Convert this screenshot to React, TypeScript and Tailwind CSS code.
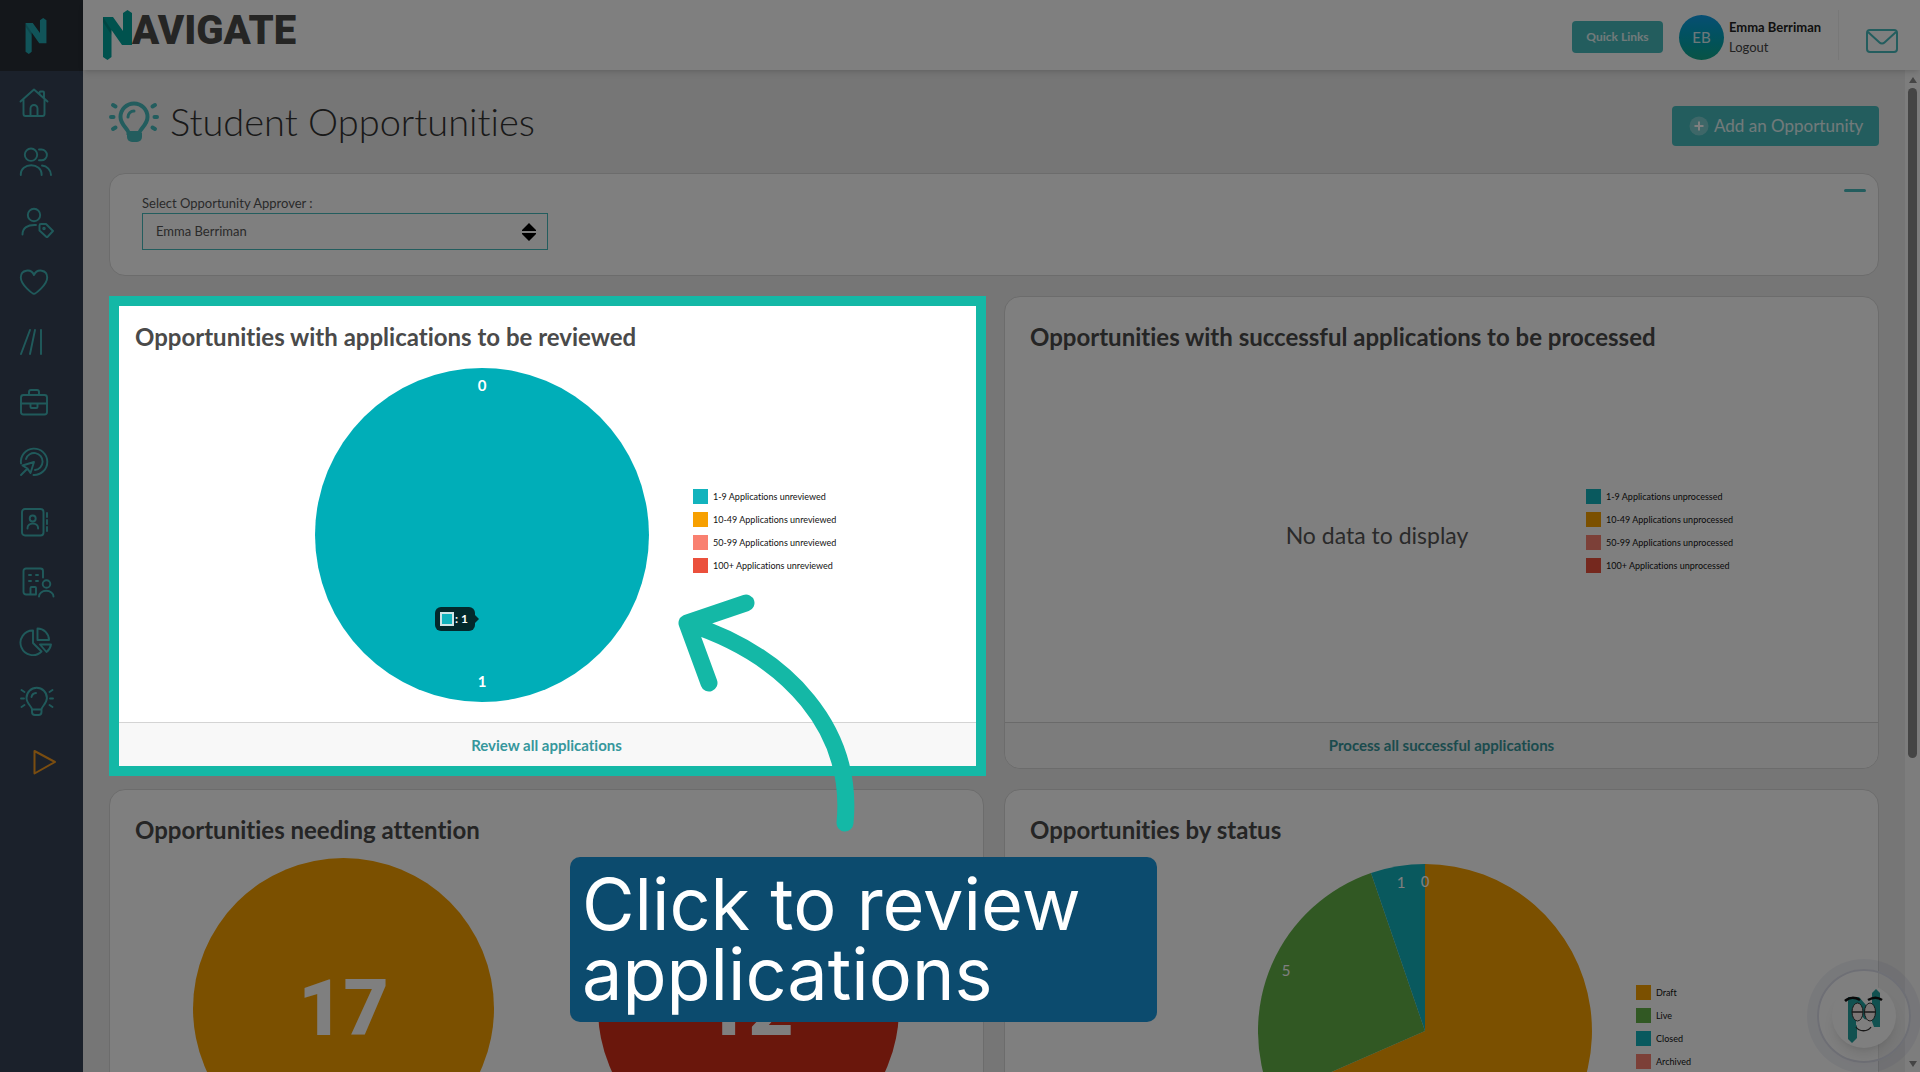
import React from "react";

interface LegendItem {
  label: string;
  color: string;
}

const navIcons: { name: string; shape: React.ReactNode }[] = [
  {
    name: "Home",
    shape: (
      <path d="M1.5 15.5 15 3.5l13.500 12M4.500 13.500V28a2 2 0 0 0 2 2h17a2 2 0 0 0 2-2V13.500M11.500 30v-7.500a3.500 3.500 0 0 1 7 0V30M20.500 8V6.500a1 1 0 0 1 1-1H24a1 1 0 0 1 1 1V12" />
    ),
  },
  {
    name: "Students",
    shape: (
      <>
        <circle cx="12" cy="8.700" r="6.200" />
        <path d="M1.800 29v-1a10.400 8.700 0 0 1 20.800 0v1M20 3.500h2.500a5.300 5.300 0 0 1 0 10.800H20M23 19.500c5 .5 9 4.500 9 9.500" />
      </>
    ),
  },
  {
    name: "Tagged students",
    shape: (
      <>
        <circle cx="15" cy="9" r="6.200" />
        <path d="M3.500 28.500C3.500 22 8.500 18.500 17 19M20.500 19.500a1.500 1.500 0 0 1 1.500-1.500h5l7 7-6 6.500-7.500-7z" />
        <circle cx="25" cy="22.500" r=".8" />
      </>
    ),
  },
  {
    name: "Favourites",
    shape: (
      <path d="M15 27.800c-1 0-13.200-8.500-13.200-16.300C1.800 3.500 12 2.200 15 9c3-6.800 13.200-5.500 13.200 2.500C28.200 19.300 16 27.800 15 27.800z" />
    ),
  },
  { name: "Pathways", shape: <path d="M11 4 2 28M16 4l-5 24M22 4v24" /> },
  {
    name: "Careers",
    shape: (
      <>
        <rect x="2" y="9" width="26" height="19.500" rx="2.500" />
        <path d="M10 9V6a2 2 0 0 1 2-2h6a2 2 0 0 1 2 2v3M2 17.500h26M11.500 17.500V21a1 1 0 0 0 1 1h5a1 1 0 0 0 1-1v-3.500" />
      </>
    ),
  },
  {
    name: "Targets",
    shape: (
      <path d="M2 17.500A13.200 13.200 0 1 1 14.500 29M7 13a8.500 8.500 0 1 1 9 11M2 29l6.500-6.500M3.500 19.500 15 16l-3.500 11-3-4.500z" />
    ),
  },
  {
    name: "Contacts",
    shape: (
      <>
        <rect x="3" y="3" width="21.500" height="26.500" rx="3" />
        <circle cx="13.700" cy="12.500" r="3" />
        <path d="M8.500 22.500v-.5a5.300 4.500 0 0 1 10.600 0v.5M28 7v4M28 14v4M28 21v4" />
      </>
    ),
  },
  {
    name: "Employers",
    shape: (
      <>
        <path d="M17 28.500H7a2.500 2.500 0 0 1-2.500-2.500V5A2.500 2.500 0 0 1 7 2.500h14.500A2.500 2.500 0 0 1 24 5v6.500M11.500 28V22a1 1 0 0 1 1-1H16a1 1 0 0 1 1 1v6M10 9h2M17 9h2M10 15h2M17 15h2M20 30.500a7 5.500 0 0 1 14.500 0" />
        <circle cx="27.500" cy="18" r="3.800" />
      </>
    ),
  },
  {
    name: "Reports",
    shape: (
      <path d="M14 4.500A12.300 12.300 0 1 0 22.500 25.500L14 17zM18.500 2.500A11.500 11.500 0 0 1 30 14H18.500zM21 18.500h11a12 12 0 0 1-4.500 7.500z" />
    ),
  },
  {
    name: "Opportunities",
    shape: (
      <path d="M13 23.500c0-3-5.500-6-5.500-11.500a10.200 10.200 0 0 1 20.400 0c0 5.500-5.400 8.500-5.400 11.500zM13 23.500V26a3 3 0 0 0 3 3h3.500a3 3 0 0 0 3-3v-2.500M12.500 11a5 5 0 0 1 4.500-4M2 12.500h3M31 12.500h3M2.500 4l3 2M33.500 4l-3 2M2.500 21l3-2M33.500 21l-3-2" />
    ),
  },
];

const reviewLegend: LegendItem[] = [
  { label: "1-9 Applications unreviewed", color: "#12b3bd" },
  { label: "10-49 Applications unreviewed", color: "#f7a000" },
  { label: "50-99 Applications unreviewed", color: "#f98070" },
  { label: "100+ Applications unreviewed", color: "#eb503c" },
];

const processLegend: LegendItem[] = [
  { label: "1-9 Applications unprocessed", color: "#12b3bd" },
  { label: "10-49 Applications unprocessed", color: "#f7a000" },
  { label: "50-99 Applications unprocessed", color: "#f98070" },
  { label: "100+ Applications unprocessed", color: "#eb503c" },
];

const statusLegend: LegendItem[] = [
  { label: "Draft", color: "#f7a000" },
  { label: "Live", color: "#62b046" },
  { label: "Closed", color: "#12b3bd" },
  { label: "Archived", color: "#f98070" },
];

const LogoMark: React.FC<{ className: string }> = ({ className }) => (
  <svg viewBox="0 0 29 50" className={className} aria-hidden="true">
    <path fill="currentColor" d="M0 7h10l10 14V3l4.500-3L29 3v32H19L8.500 20v27l-4 3L0 47z" />
    <path fill="#000" fillOpacity=".15" d="M0 7 8.500 20v5L0 12z" />
  </svg>
);

const Sidebar: React.FC = () => (
  <aside className="flex w-[83px] shrink-0 flex-col bg-[#364256]">
    <div className="flex h-[71px] items-center bg-[#282e36] pl-[25px]">
      <LogoMark className="h-9 w-[22px] text-[#22a9b3]" />
    </div>
    <nav className="flex flex-col pt-px text-[#40b5b7]">
      {navIcons.map((item) => (
        <a key={item.name} href="#" aria-label={item.name} className="flex h-[60px] items-center pl-[19px]">
          <svg
            viewBox="0 0 36 32"
            className="h-8 w-9"
            fill="none"
            stroke="currentColor"
            strokeWidth="1.900"
            strokeLinecap="round"
            strokeLinejoin="round"
          >
            {item.shape}
          </svg>
        </a>
      ))}
      <a href="#" aria-label="Play tour" className="flex h-[60px] items-center pl-8 text-[#f59a20]">
        <svg viewBox="0 0 26 26" className="size-[26px]" fill="none" stroke="currentColor" strokeWidth="2" strokeLinejoin="round">
          <path d="M2.500 2v22.500L23 13z" />
        </svg>
      </a>
    </nav>
  </aside>
);

const Header: React.FC = () => (
  <header className="relative flex h-[70px] shrink-0 items-center justify-between bg-white pl-5 shadow-md">
    <a href="#" aria-label="Navigate" className="flex items-center">
      <LogoMark className="h-[50px] w-[29px] text-[#00a49d]" />
      <span className="pb-2 font-['Roboto',sans-serif] text-[40px] leading-10 font-black text-[#4a4a48]">AVIGATE</span>
    </a>
    <div className="flex items-center">
      <button type="button" className="mt-1 h-8 w-[91px] rounded bg-[#46babd] text-xs font-bold text-white/85">
        Quick Links
      </button>
      <div className="mt-1 ml-4 flex size-[45px] items-center justify-center rounded-full bg-linear-to-b from-[#109de8] to-[#12a78a] text-[15px] text-white/85">
        EB
      </div>
      <div className="mt-1 ml-[5px] w-[109px] text-[13px] leading-5 text-[#444]">
        <p className="font-bold text-[#222]">Emma Berriman</p>
        <a href="#">Logout</a>
      </div>
      <div className="flex h-[50px] w-[82px] items-center border-l border-[#f0f0f0] pt-3 pl-[27px]">
        <button type="button" aria-label="Messages">
          <svg viewBox="0 0 32 24" className="h-6 w-8" fill="none" stroke="#46babd" strokeWidth="2" strokeLinejoin="round">
            <rect x="1" y="1" width="30" height="22" rx="3" />
            <path d="m2 3 11.500 10.500a3.500 3.500 0 0 0 5 0L30 3" />
          </svg>
        </button>
      </div>
    </div>
  </header>
);

const Legend: React.FC<{ items: LegendItem[] }> = ({ items }) => (
  <ul className="flex flex-col gap-2 pb-2 text-[9px] leading-[15px] text-[#111]">
    {items.map((item) => (
      <li key={item.label} className="flex gap-[5px] whitespace-nowrap">
        <span className="size-[15px]" style={{ backgroundColor: item.color }} />
        {item.label}
      </li>
    ))}
  </ul>
);

const Card: React.FC<{ title: string; footer?: string; className?: string; children: React.ReactNode }> = ({
  title,
  footer,
  className = "",
  children,
}) => (
  <section className={`relative flex flex-col rounded-2xl border border-[#d8d8d8] bg-white ${className}`}>
    <h2 className="px-[25px] pt-6 text-2xl font-bold text-[#4a4a4a]">{title}</h2>
    {children}
    {footer && (
      <div className="flex h-[46px] items-center justify-center rounded-b-2xl border-t border-[#d4d4d4] bg-[#f8f8f8]">
        <a href="#" className="text-[15px] font-bold text-[#36979c]">
          {footer}
        </a>
      </div>
    )}
  </section>
);

const ReviewPie: React.FC = () => (
  <div className="relative">
    <svg viewBox="0 0 334 334" className="size-[334px]" fill="#fff" fontSize="15" fontWeight="700" textAnchor="middle">
      <circle cx="167" cy="167" r="167" fill="#00aeb8" />
      <text x="167" y="23">0</text>
      <text x="167" y="319">1</text>
    </svg>
    <div className="absolute top-[239px] left-[120px] flex h-6 w-10 items-center gap-px rounded-md bg-[#03292c] pl-[5px] text-xs font-bold text-white">
      <span className="size-[14px] border-2 border-[#cfe5e6] bg-[#12b3bd]" />: 1
      <svg viewBox="0 0 5 10" className="absolute top-[7px] -right-1 h-[10px] w-[5px]">
        <path d="m0 0 5 5-5 5z" fill="#03292c" />
      </svg>
    </div>
  </div>
);

const StatusPie: React.FC = () => (
  <svg viewBox="0 0 334 334" className="size-[334px]" fill="#fff" fontSize="15" textAnchor="middle">
    <path d="M167 167V0A167 167 0 1 1 14 234z" fill="#f7a000" />
    <path d="M167 167 14 234A167 167 0 0 1 113 9z" fill="#62b046" />
    <path d="M167 167 113 9A167 167 0 0 1 167 0z" fill="#12b3bd" />
    <text x="143" y="24">1</text>
    <text x="167" y="23">0</text>
    <text x="28" y="112">5</text>
  </svg>
);

const Annotation: React.FC = () => (
  <>
    <div className="absolute -top-px -right-[3px] -bottom-2 -left-px border-10 border-[#14b8a6]" />
    <svg
      viewBox="0 0 190 240"
      className="absolute top-[303px] left-[559px] h-[240px] w-[190px] overflow-visible"
      fill="none"
      stroke="#14b8a6"
      strokeWidth="17"
      strokeLinecap="round"
      strokeLinejoin="round"
    >
      <path d="M77 3 18 23l22 60M18 23C120 56 185 130 176 223" />
    </svg>
  </>
);

const App: React.FC = () => {
  return (
    <div className="relative flex h-screen overflow-hidden bg-[#ececec] font-['Lato',sans-serif] [font-variant-ligatures:none]">
      <Sidebar />
      <div className="flex min-w-0 flex-1 flex-col">
        <Header />
        <div className="flex min-h-0 flex-1">
          <main className="min-w-0 flex-1 overflow-hidden px-[26px]">
            <div className="flex h-[103px] items-center justify-between">
              <h1 className="flex items-center gap-[11px] text-[38px] font-light text-[#333]">
                <svg viewBox="0 0 50 42" className="h-[42px] w-[50px]" fill="none" stroke="#46babd" strokeWidth="4" strokeLinecap="round">
                  <path d="M19.500 32c0-4-8-8-8-16a13.500 13.500 0 0 1 27 0c0 8-8 12-8 16z" />
                  <path d="M18 32h15v4a5 5 0 0 1-5 5h-5a5 5 0 0 1-5-5z" fill="#46babd" stroke="none" />
                  <path d="M19 16a6 6 0 0 1 6-6" strokeWidth="3" />
                  <path d="M2 16h2.500M45.500 16H48M4 4l2.500 1.500M46 4l-2.500 1.500M4 28l2.500-1.500M46 28l-2.500-1.500" />
                </svg>
                Student Opportunities
              </h1>
              <button type="button" className="mt-2 flex h-10 w-[207px] items-center gap-[5px] rounded bg-[#46babd] pl-[17px] text-[17px] whitespace-nowrap text-white/85">
                <svg viewBox="0 0 20 20" className="size-5" stroke="#fff" strokeWidth="2">
                  <circle cx="10" cy="10" r="9.500" fill="#fff" fillOpacity=".3" stroke="none" />
                  <path d="M10 5.500v9M5.500 10h9" />
                </svg>
                Add an Opportunity
              </button>
            </div>

            <section className="flex h-[103px] justify-between rounded-2xl border border-[#d8d8d8] bg-white pt-[19px] pr-3 pl-8 text-[13px] text-[#555]">
              <div>
                <label htmlFor="approver" className="block leading-5">
                  Select Opportunity Approver :
                </label>
                <div className="relative w-[406px]">
                  <select id="approver" className="h-[37px] w-full appearance-none border border-[#46babd] pl-[13px]">
                    <option>Emma Berriman</option>
                  </select>
                  <svg viewBox="0 0 14 18" className="pointer-events-none absolute top-[10px] right-3 h-[18px] w-[14px]">
                    <path d="M7 0l7 7v1H0V7zM7 18l7-7v-1H0v1z" />
                  </svg>
                </div>
              </div>
              <button type="button" aria-label="Collapse" className="-mt-1 h-[3px] w-[22px] rounded-full bg-[#46babd]" />
            </section>

            <div className="mt-5 grid grid-cols-2 gap-5">
              <Card title="Opportunities with applications to be reviewed" footer="Review all applications" className="z-20">
                <div className="flex items-center gap-11 pt-[15px] pb-5 pl-[205px]">
                  <ReviewPie />
                  <Legend items={reviewLegend} />
                </div>
                <Annotation />
                <p className="absolute top-[560px] left-[460px] h-[165px] w-[587px] rounded-[10px] bg-[#0c4b6e] px-3 pt-3 font-['Inter',sans-serif] text-[72px] leading-[70px] text-white">
                  Click to review applications
                </p>
              </Card>

              <Card title="Opportunities with successful applications to be processed" footer="Process all successful applications">
                <div className="flex items-center gap-[42px] pt-[15px] pb-5 pl-[205px]">
                  <p className="flex h-[334px] w-[334px] items-center justify-center text-[23px] text-[#555]">No data to display</p>
                  <Legend items={processLegend} />
                </div>
              </Card>

              <Card title="Opportunities needing attention">
                <div className="flex gap-[104px] pt-3 pl-[83px] font-['Roboto',sans-serif] text-[78px] font-black text-white">
                  <div className="flex size-[301px] items-center justify-center rounded-full bg-[#f7a000]">17</div>
                  <div className="flex size-[301px] items-center justify-center rounded-full bg-[#d42e18]">12</div>
                </div>
              </Card>

              <Card title="Opportunities by status">
                <div className="flex items-center gap-11 pt-[18px] pb-5 pl-[253px]">
                  <StatusPie />
                  <Legend items={statusLegend} />
                </div>
              </Card>
            </div>
          </main>

          <div className="flex w-[15px] shrink-0 flex-col items-center justify-between bg-[#fafafa] pt-[7px] pb-[5px]" aria-hidden="true">
            <div className="flex h-[681px] flex-col items-center gap-[5px]">
              <svg viewBox="0 0 8 6" className="h-[6px] w-2" fill="#8a8a8a">
                <path d="M4 0l4 6H0z" />
              </svg>
              <div className="w-[9px] flex-1 rounded-full bg-[#8a8a8a]" />
            </div>
            <svg viewBox="0 0 8 6" className="h-[6px] w-2" fill="#8a8a8a">
              <path d="M4 6l4-6H0z" />
            </svg>
          </div>
        </div>
      </div>

      <button
        type="button"
        aria-label="Open assistant"
        className="absolute right-[9px] bottom-[9px] flex size-[94px] items-center justify-center rounded-full border-2 border-[#dcdeea] bg-white/30 shadow-[0_0_0_10px_rgba(160,165,200,0.15)]"
      >
        <span className="flex size-16 items-center justify-center rounded-full bg-white shadow-lg">
          <svg viewBox="0 0 40 54" className="h-[54px] w-10">
            <path d="M4 8h11l13 15V4l4-4 4 4v34h-9L13 21v28l-5 5-4-4z" fill="#22a3a0" />
            <path d="m12 31 15-1 3 8-9 5-9-7z" fill="#fff" />
            <g fill="#f6ebe8" stroke="#333" strokeWidth="1">
              <ellipse cx="13.500" cy="23" rx="5.500" ry="9" />
              <ellipse cx="26" cy="23" rx="5.500" ry="9" />
            </g>
            <path d="M8 23h11M20.500 23h11M12 38c3 5 12 5 15 0" fill="none" stroke="#333" strokeWidth="1.300" />
            <path d="M1 12c4-4 10-4 15-1M24 11c5-3 10-3 14 0" fill="none" stroke="#111" strokeWidth="2.500" />
          </svg>
        </span>
      </button>

      <div className="pointer-events-none absolute inset-0 z-10 bg-black/50" />
    </div>
  );
};

export default App;
